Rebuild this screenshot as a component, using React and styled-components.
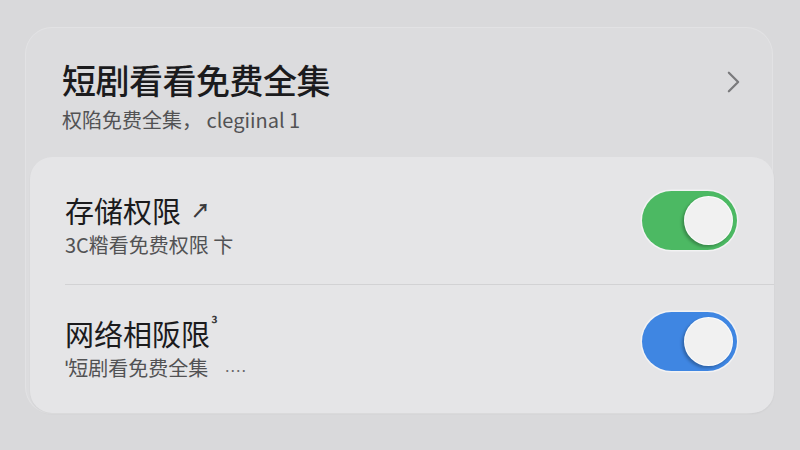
import React, { useState } from 'react';
import styled, { createGlobalStyle } from 'styled-components';

const GlobalStyle = createGlobalStyle`
  html, body {
    margin: 0;
    padding: 0;
    background: #d9d9db;
  }
  body {
    font-family: "Noto Sans CJK SC", "Noto Sans", "Liberation Sans", sans-serif;
    width: 800px;
    height: 450px;
    overflow: hidden;
  }
`;

const settings = [
  {
    id: 'storage',
    title: '存储权限',
    mark: '↗',
    sub: '3C糌看免费权限 卞',
    dots: false,
    on: true,
    color: '#4cb963',
    pad: [35, 26],
    shift: -1,
  },
  {
    id: 'network',
    title: '网络相阪限',
    mark: '³',
    sub: 'ˈ短剧看免费全集',
    dots: true,
    on: true,
    color: '#3f86e2',
    pad: [30, 30],
    shift: -3,
  },
];

function Toggle({ on, color, shift, onClick }) {
  return (
    <Switch $on={on} $color={color} $shift={shift} onClick={onClick}>
      <Knob $on={on} />
    </Switch>
  );
}

export default function App() {
  const [state, setState] = useState(
    Object.fromEntries(settings.map((s) => [s.id, s.on]))
  );

  return (
    <>
      <GlobalStyle />
      <Page>
        <Panel>
          <Header>
            <HeaderText>
              <Title>短剧看看免费全集</Title>
              <Sub>权陷免费全集， clegiinal 1</Sub>
            </HeaderText>
            <Chevron viewBox="0 0 14 24">
              <path d="M2 2 L12 12 L2 22" fill="none" stroke="#7a7a7c" strokeWidth="2.4" strokeLinecap="round" strokeLinejoin="round" />
            </Chevron>
          </Header>

          <Group>
            {settings.map((s) => (
              <Row key={s.id} $top={s.pad[0]} $bottom={s.pad[1]}>
                <RowText>
                  <RowTitle>
                    {s.title}
                    <Mark $sup={s.mark === '³'}>{s.mark}</Mark>
                  </RowTitle>
                  <RowSub>
                    {s.sub}
                    {s.dots && <Dots>····</Dots>}
                  </RowSub>
                </RowText>
                <Toggle
                  on={state[s.id]}
                  color={s.color}
                  shift={s.shift}
                  onClick={() => setState({ ...state, [s.id]: !state[s.id] })}
                />
              </Row>
            ))}
          </Group>
        </Panel>
      </Page>
    </>
  );
}

const Page = styled.div`
  padding: 28px 28px 0 26px;
`;

const Panel = styled.div`
  background: #dcdcde;
  border-radius: 26px;
  display: flex;
  flex-direction: column;
  box-shadow: 0 0 0 1px rgba(255, 255, 255, 0.25);
`;

const Header = styled.div`
  display: flex;
  align-items: center;
  justify-content: space-between;
  padding: 32px 36px 24px 36px;
`;

const HeaderText = styled.div`
  display: flex;
  flex-direction: column;
  gap: 7px;
`;

const Title = styled.div`
  font-size: 34px;
  line-height: 40px;
  font-weight: 500;
  color: #1b1b1d;
  letter-spacing: -0.5px;
`;

const Sub = styled.div`
  font-size: 20px;
  line-height: 26px;
  color: #525254;
`;

const Chevron = styled.svg`
  width: 13px;
  height: 24px;
  margin-right: -4px;
  margin-bottom: 30px;
`;

const Group = styled.div`
  background: #e5e5e7;
  border-radius: 22px;
  margin: 0 -2px 0 4px;
  box-shadow: 0 1px 2px rgba(0, 0, 0, 0.05);
`;

const Row = styled.div`
  display: flex;
  align-items: flex-start;
  justify-content: space-between;
  margin-left: 35px;
  padding: ${(p) => p.$top}px 37px ${(p) => p.$bottom}px 0;

  & + & {
    border-top: 1.5px solid #d2d2d4;
  }
`;

const RowText = styled.div`
  display: flex;
  flex-direction: column;
  gap: 4px;
`;

const RowTitle = styled.div`
  font-size: 29px;
  line-height: 36px;
  color: #1b1b1d;
  display: flex;
  align-items: flex-start;
`;

const Mark = styled.span`
  font-size: ${(p) => (p.$sup ? '16px' : '19px')};
  line-height: ${(p) => (p.$sup ? '16px' : '36px')};
  margin-left: ${(p) => (p.$sup ? '1px' : '10px')};
  font-weight: 700;
  color: #3a3a3c;
`;

const RowSub = styled.div`
  font-size: 20px;
  line-height: 26px;
  color: #525254;
  white-space: pre;
`;

const Dots = styled.span`
  font-family: "Liberation Sans", sans-serif;
  font-size: 18px;
  margin-left: 16px;
  letter-spacing: -0.5px;
  color: #6a6a6c;
`;

const Switch = styled.div`
  width: 95px;
  height: 59px;
  border-radius: 30px;
  background: ${(p) => (p.$on ? p.$color : '#c8c8ca')};
  box-shadow: 0 0 0 1.5px rgba(255, 255, 255, 0.5);
  display: flex;
  align-items: center;
  justify-content: ${(p) => (p.$on ? 'flex-end' : 'flex-start')};
  padding: 0 4px;
  box-sizing: border-box;
  margin-top: ${(p) => p.$shift}px;
  cursor: pointer;
`;

const Knob = styled.div`
  width: 49px;
  height: 49px;
  border-radius: 50%;
  background: #f1f1f1;
  border: 1.5px solid rgba(255, 255, 255, 0.9);
  box-shadow: -2px 2px 3px rgba(0, 0, 0, 0.25);
  box-sizing: border-box;
`;
